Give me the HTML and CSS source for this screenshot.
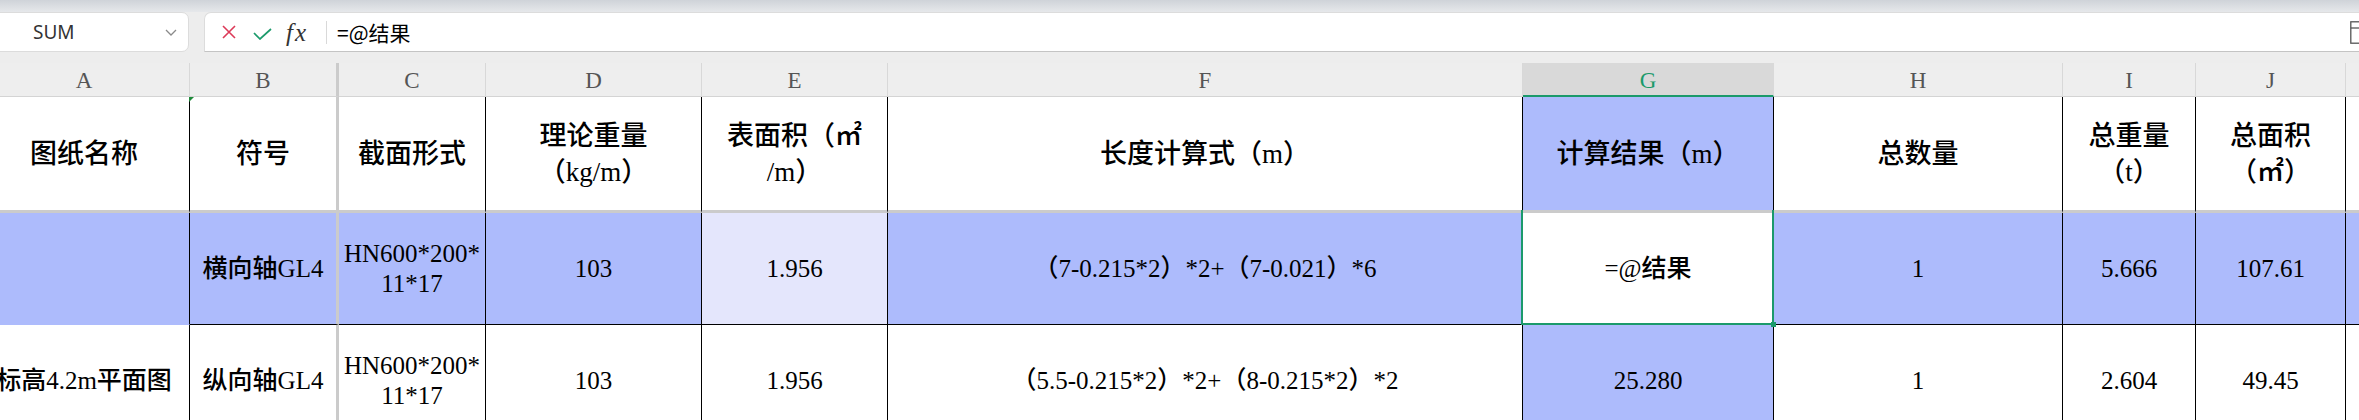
FILE: index.html
```html
<!DOCTYPE html>
<html lang="zh-CN">
<head>
    <meta charset="UTF-8">
    <title>工作表</title>
    <link rel="stylesheet" href="styles.css">
</head>
<body>
    <!-- name box + formula bar -->
    <div class="toolbar">
        <div class="namebox">
            <span class="name">SUM</span>
            <svg class="chev" width="12" height="7" viewBox="0 0 12 7"><polyline points="1,1 6,6 11,1" fill="none" stroke="#8a8a8a" stroke-width="1.3"/></svg>
        </div>
        <div class="fbar">
            <svg class="ico-x" width="14" height="14" viewBox="0 0 14 14"><path d="M1 1 L13 13 M13 1 L1 13" stroke="#dc3a58" stroke-width="1.6"/></svg>
            <svg class="ico-ok" width="19" height="12" viewBox="0 0 19 12"><polyline points="1,5 7,11 18,1" fill="none" stroke="#1b9a6b" stroke-width="1.7"/></svg>
            <span class="fx">fx</span>
            <span class="fsep"></span>
            <span class="ftext">=@结果</span>
            <svg class="ico-exp" width="18" height="23" viewBox="0 0 18 23"><rect x="0.8" y="0.8" width="17" height="21.4" fill="none" stroke="#555" stroke-width="1.3"/><line x1="0.8" y1="7" x2="18" y2="7" stroke="#555" stroke-width="1.3"/></svg>
        </div>
    </div>

    <div class="sheet">
        <!-- column letters -->
        <div class="hd">A</div>
        <div class="hd fz">B</div>
        <div class="hd">C</div>
        <div class="hd">D</div>
        <div class="hd">E</div>
        <div class="hd">F</div>
        <div class="hd hd-sel">G</div>
        <div class="hd">H</div>
        <div class="hd">I</div>
        <div class="hd">J</div>
        <div class="hd"></div>

        <!-- row 1 -->
        <div class="c t">图纸名称</div>
        <div class="c t fz mark">符号</div>
        <div class="c t">截面形式</div>
        <div class="c t">理论重量<br>（kg/m）</div>
        <div class="c t">表面积（㎡<br>/m）</div>
        <div class="c t">长度计算式（m）</div>
        <div class="c t blue">计算结果（m）</div>
        <div class="c t">总数量</div>
        <div class="c t">总重量<br>（t）</div>
        <div class="c t">总面积<br>（㎡）</div>
        <div class="c t"></div>

        <!-- row 2 -->
        <div class="c v blue noline"></div>
        <div class="c v blue fz">横向轴GL4</div>
        <div class="c v blue">HN600*200*<br>11*17</div>
        <div class="c v blue">103</div>
        <div class="c v lilac">1.956</div>
        <div class="c v blue">（7-0.215*2）*2+（7-0.021）*6</div>
        <div class="c v active">=@结果</div>
        <div class="c v blue">1</div>
        <div class="c v blue">5.666</div>
        <div class="c v blue">107.61</div>
        <div class="c v blue"></div>

        <!-- row 3 -->
        <div class="c v last">标高4.2m平面图</div>
        <div class="c v last fz">纵向轴GL4</div>
        <div class="c v last">HN600*200*<br>11*17</div>
        <div class="c v last">103</div>
        <div class="c v last">1.956</div>
        <div class="c v last">（5.5-0.215*2）*2+（8-0.215*2）*2</div>
        <div class="c v last blue">25.280</div>
        <div class="c v last">1</div>
        <div class="c v last">2.604</div>
        <div class="c v last">49.45</div>
        <div class="c v last"></div>
    </div>
</body>
</html>
```

FILE: styles.css
```css
body {
    margin: 0;
    width: 2359px;
    height: 420px;
    overflow: hidden;
    background: #fff;
}

/* top bar */
.toolbar {
    display: flex;
    height: 63px;
    box-sizing: border-box;
    padding: 12px 0 11px;
    background: linear-gradient(#cfd3d9 0, #e6e8eb 12px, #ededed 12px);
    font-family: "Noto Sans", "Noto Sans CJK SC", sans-serif;
}
.namebox {
    display: flex;
    align-items: center;
    width: 199px;
    margin-left: -10px;
    padding-left: 42px;
    padding-right: 11px;
    box-sizing: border-box;
    background: #fff;
    border: 1px solid #dcdcdc;
    border-radius: 7px;
}
.name {
    flex: 1;
    font-size: 19px;
    color: #333;
}
.fbar {
    display: flex;
    align-items: center;
    flex: 1;
    margin-left: 15px;
    margin-right: -12px;
    padding-left: 17px;
    padding-right: 2px;
    background: #fff;
    border: 1px solid #dcdcdc;
    border-bottom-color: #c4c4c4;
    border-radius: 7px 0 0 0;
}
.ico-ok {
    margin-left: 17px;
    margin-top: 3px;
}
.fx {
    margin-left: 14px;
    font-family: "Liberation Serif", serif;
    font-style: italic;
    font-size: 25px;
    letter-spacing: 2px;
    color: #333;
    line-height: 1;
}
.fsep {
    width: 1px;
    height: 23px;
    margin-left: 18px;
    background: #d9d9d9;
}
.ftext {
    flex: 1;
    margin-left: 10px;
    font-family: "Noto Sans CJK SC", sans-serif;
    font-size: 21px;
    color: #000;
}

/* the grid */
.sheet {
    display: grid;
    grid-template-columns: 211px 149px 147px 216px 186px 635px 251px 289px 133px 150px 100px;
    grid-template-rows: 34px 116px 112px 112px;
    margin-left: -21px;
    font-family: "Liberation Serif", "Noto Sans CJK SC", serif;
    font-weight: 500;
    color: #000;
}
.hd {
    display: flex;
    align-items: center;
    justify-content: center;
    padding-top: 3px;
    box-sizing: border-box;
    background: #eeeeee;
    border-right: 1px solid #d8d8d8;
    border-bottom: 1px solid #d4d4d4;
    font-size: 23px;
    font-weight: normal;
    color: #555;
}
.hd-sel {
    background: #d9d9d9;
    border-right-color: #d9d9d9;
    border-bottom: 2px solid #1b9a6b;
    color: #1b9a6b;
}
.c {
    display: flex;
    align-items: center;
    justify-content: center;
    text-align: center;
    white-space: nowrap;
    box-sizing: border-box;
    background: #fff;
    border-right: 1px solid #000;
    position: relative;
}
.t {
    font-size: 27px;
    line-height: 36px;
    border-bottom: 3px solid #cbcbcb;
}
.v {
    font-size: 25px;
    line-height: 30px;
    border-bottom: 1px solid #000;
}
.last {
    border-bottom: none;
}
.noline {
    border-bottom-color: #adbbfc;
}
.fz {
    border-right: 3px solid #cbcbcb;
}
.blue {
    background: #adbbfc;
}
.lilac {
    background: #e4e6fc;
}

/* green corner mark */
.mark::before {
    content: "";
    position: absolute;
    left: -1px;
    top: 0;
    border-top: 5px solid #1f8a3a;
    border-right: 5px solid transparent;
}

/* active cell */
.active::after {
    content: "";
    position: absolute;
    left: -2px;
    right: -1px;
    top: -3px;
    bottom: -1px;
    border: 2px solid #1b9a6b;
    border-top: none;
}
.active::before {
    content: "";
    position: absolute;
    right: -3px;
    bottom: -3px;
    width: 5px;
    height: 5px;
    background: #1b9a6b;
    z-index: 1;
}
```
